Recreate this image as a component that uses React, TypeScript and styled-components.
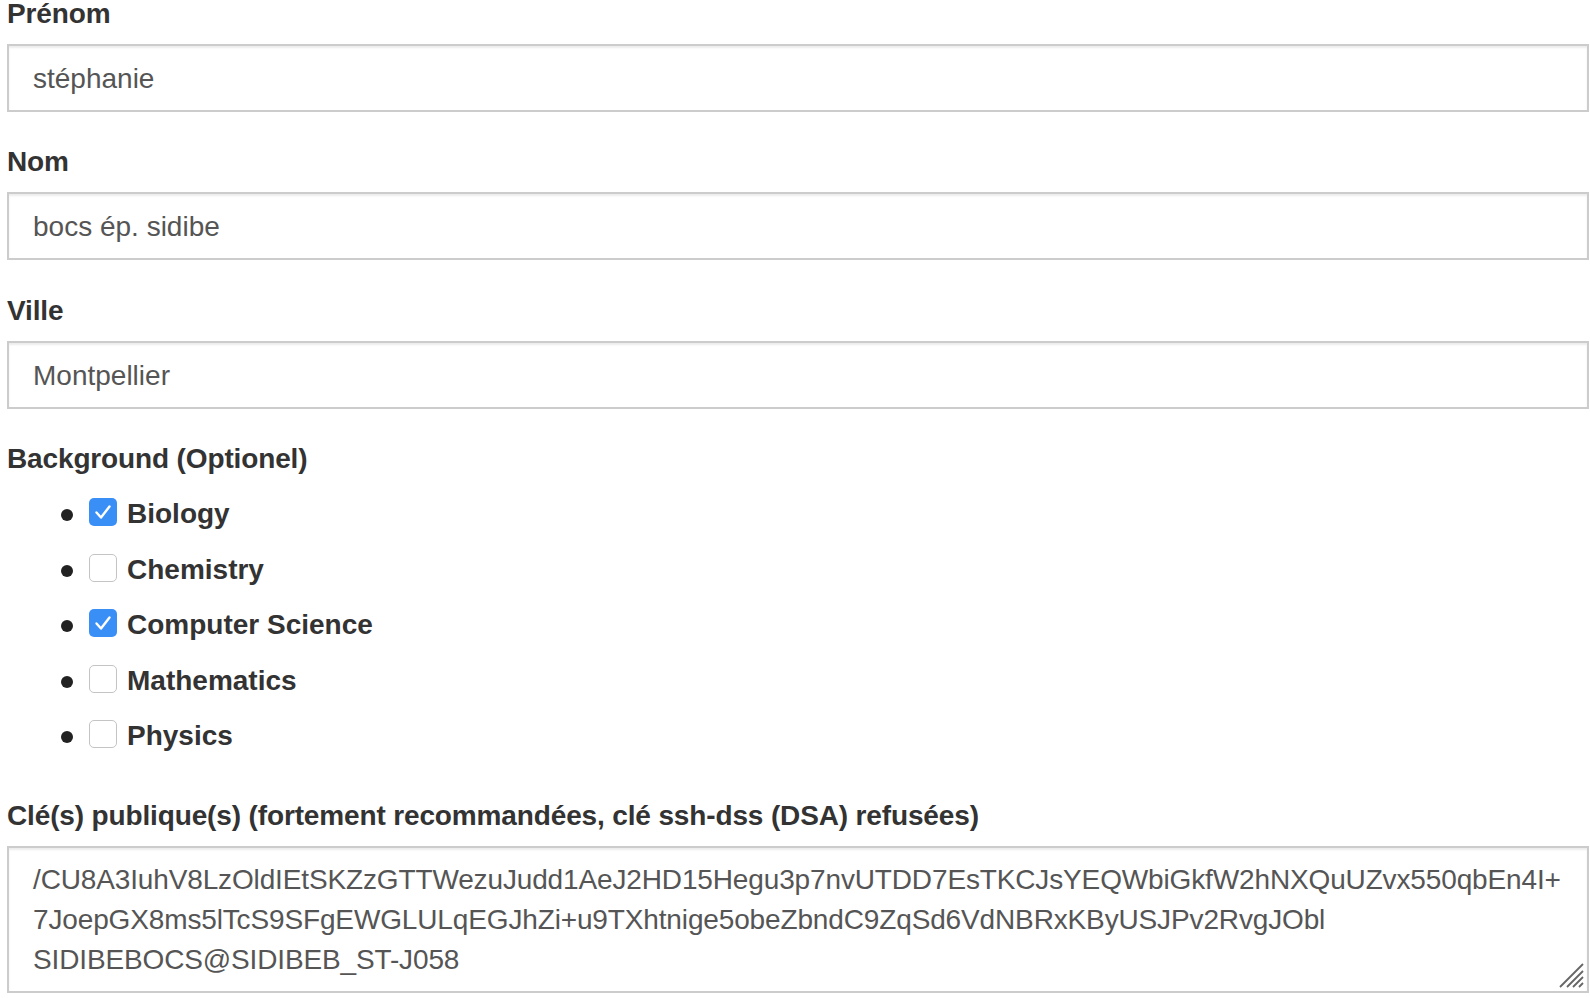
import React from 'react';
import styled, { createGlobalStyle } from 'styled-components';

const GlobalStyle = createGlobalStyle`
  html, body {
    margin: 0;
    padding: 0;
    background: #fff;
    overflow: hidden;
  }
  body {
    font-family: "Liberation Sans", Arial, Helvetica, sans-serif;
    font-size: 28px;
    line-height: 40px;
    color: #333;
  }
`;

const Form = styled.form`
  display: flex;
  flex-direction: column;
  margin-top: -6.5px;
  padding: 0 1px 0 7px;
`;

const Group = styled.div<{ $gap?: number }>`
  display: flex;
  flex-direction: column;
  margin-bottom: ${(p) => p.$gap ?? 30.5}px;
`;

const Label = styled.label`
  display: block;
  font-weight: 700;
  letter-spacing: -0.14px;
  margin-bottom: 10px;
`;

const TextInput = styled.input`
  display: block;
  box-sizing: border-box;
  width: 100%;
  height: 68px;
  padding: 13px 24px 11px;
  border: 2px solid #ccc;
  border-radius: 0;
  box-shadow: inset 0 2px 2px rgba(0, 0, 0, 0.075);
  font-family: inherit;
  font-size: 28px;
  color: #555;
  background: #fff;
  outline: none;
`;

const CheckList = styled.ul`
  list-style: none;
  margin: 5px 0 0;
  padding: 0 0 0 54px;
  display: flex;
  flex-direction: column;
  gap: 15.5px;
`;

const CheckItem = styled.li`
  display: flex;
  align-items: center;
  height: 40px;
`;

const Bullet = styled.span`
  width: 12px;
  height: 12px;
  border-radius: 50%;
  background: #222;
  margin-right: 16px;
  margin-top: 2px;
`;

const Box = styled.span<{ $checked: boolean }>`
  box-sizing: border-box;
  width: 28px;
  height: 28px;
  border-radius: 5px;
  display: flex;
  align-items: center;
  justify-content: center;
  margin-right: 10px;
  margin-top: -4px;
  background: ${(p) => (p.$checked ? '#3a8ff7' : '#fff')};
  border: ${(p) => (p.$checked ? 'none' : '1.5px solid #c4c4c4')};
`;

const ItemText = styled.span`
  font-weight: 700;
  color: #333;
`;

const AreaWrap = styled.div`
  position: relative;
`;

const KeyArea = styled.textarea`
  display: block;
  box-sizing: border-box;
  width: 100%;
  height: 147px;
  padding: 12px 24px;
  border: 2px solid #ccc;
  border-radius: 0;
  box-shadow: inset 0 2px 2px rgba(0, 0, 0, 0.075);
  font-family: inherit;
  font-size: 28px;
  line-height: 40px;
  letter-spacing: -0.14px;
  color: #555;
  background: #fff;
  resize: none;
  white-space: pre;
  overflow: hidden;
  outline: none;
`;

const Grip = styled.svg`
  position: absolute;
  right: 4px;
  bottom: 4px;
  width: 28px;
  height: 28px;
`;

const subjects = [
  { name: 'Biology', checked: true },
  { name: 'Chemistry', checked: false },
  { name: 'Computer Science', checked: true },
  { name: 'Mathematics', checked: false },
  { name: 'Physics', checked: false },
];

const keyText =
  '/CU8A3IuhV8LzOldIEtSKZzGTTWezuJudd1AeJ2HD15Hegu3p7nvUTDD7EsTKCJsYEQWbiGkfW2hNXQuUZvx550qbEn4I+\n' +
  '7JoepGX8ms5lTcS9SFgEWGLULqEGJhZi+u9TXhtnige5obeZbndC9ZqSd6VdNBRxKByUSJPv2RvgJObl\n' +
  'SIDIBEBOCS@SIDIBEB_ST-J058';

const Check = () => (
  <svg width="18" height="16" viewBox="0 0 18 16">
    <path d="M2.5 8.5 L7 13.5 L15.5 2.5" fill="none" stroke="#fff" strokeWidth="2.4" strokeLinecap="round" strokeLinejoin="round" />
  </svg>
);

export default function App() {
  return (
    <>
      <GlobalStyle />
      <Form>
        <Group>
          <Label>Prénom</Label>
          <TextInput defaultValue="stéphanie" />
        </Group>
        <Group>
          <Label>Nom</Label>
          <TextInput defaultValue="bocs ép. sidibe" />
        </Group>
        <Group>
          <Label>Ville</Label>
          <TextInput defaultValue="Montpellier" />
        </Group>
        <Group $gap={40}>
          <Label>Background (Optionel)</Label>
          <CheckList>
            {subjects.map((s) => (
              <CheckItem key={s.name}>
                <Bullet />
                <Box $checked={s.checked}>{s.checked && <Check />}</Box>
                <ItemText>{s.name}</ItemText>
              </CheckItem>
            ))}
          </CheckList>
        </Group>
        <Group>
          <Label>Clé(s) publique(s) (fortement recommandées, clé ssh-dss (DSA) refusées)</Label>
          <AreaWrap>
            <KeyArea defaultValue={keyText} />
            <Grip viewBox="0 0 28 28">
              <path d="M3 26 L26 3 M10 26 L26 10 M16 26 L26 16 M22 26 L26 22" stroke="#666" strokeWidth="1.8" fill="none" />
            </Grip>
          </AreaWrap>
        </Group>
      </Form>
    </>
  );
}
